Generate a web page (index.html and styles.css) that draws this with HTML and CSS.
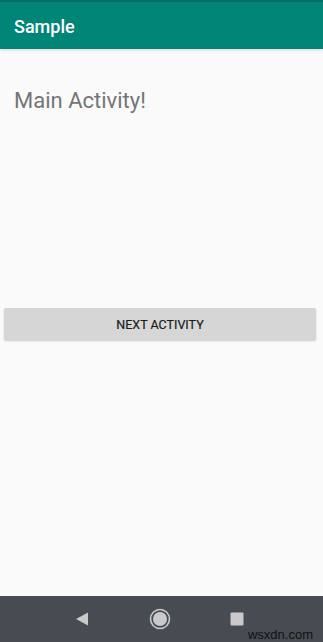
FILE: index.html
```html
<!DOCTYPE html>
<html lang="en">
	<head>
		<meta charset="utf-8"/>
		<title>Sample</title>
		<link rel="stylesheet" href="styles.css">
	</head>
	<body>
		<div class="screen">
			<div class="toolbar">
				<span class="titulo">Sample</span>
			</div>
			<div class="conteudo">
				<div class="texto">Main Activity!</div>
				<div class="botao">NEXT ACTIVITY</div>
			</div>
			<div class="navbar">
				<svg class="icone" width="16" height="16" viewBox="0 0 16 16">
					<path d="M2 8 L14 1.5 L14 14.5 Z" fill="#c9c9c9"/>
				</svg>
				<svg class="icone" width="22" height="22" viewBox="0 0 22 22">
					<circle cx="11" cy="11" r="9.5" fill="none" stroke="#c9c9c9" stroke-width="1.6"/>
					<circle cx="11" cy="11" r="7" fill="#c9c9c9"/>
				</svg>
				<svg class="icone" width="14" height="14" viewBox="0 0 14 14">
					<rect x="0.5" y="0.5" width="13" height="13" rx="1" fill="#c9c9c9"/>
				</svg>
				<span class="marca">wsxdn.com</span>
			</div>
		</div>
	</body>
</html>
```
FILE: styles.css
```css
html, body {
	width: 100%; height: 100%;
	padding: 0; border: 0; margin: 0;
	background: #fafafa;
	font-family: Roboto, "Liberation Sans", sans-serif;
}
.screen {
	display: flex;
	flex-direction: column;
	height: 100%;
}
.toolbar {
	height: 49px;
	background: #008577;
	border-top: 2px solid #006d61;
	box-sizing: border-box;
	display: flex;
	align-items: center;
	padding: 0 14px;
	box-shadow: 0 1px 3px rgba(0,0,0,0.15);
}
.titulo {
	color: #fff;
	font-size: 18px;
	font-weight: 500;
	margin-top: 2px;
}
.conteudo {
	flex: 1;
	display: flex;
	flex-direction: column;
}
.texto {
	margin: 39px 0 0 14px;
	font-size: 22px;
	color: #757575;
}
.botao {
	margin: 195px 7px 0 4px;
	height: 32px;
	background: #d6d6d6;
	border-radius: 2px;
	box-shadow: 0 1px 2px rgba(0,0,0,0.2);
	display: flex;
	justify-content: center;
	align-items: center;
	font-size: 12.5px;
	font-weight: 400;
	color: #1a1a1a;
	-webkit-text-stroke: 0.2px #1a1a1a;
}
.navbar {
	height: 46px;
	background: #464c51;
	display: flex;
	align-items: center;
	padding: 0 0 0 74px;
	position: relative;
}
.navbar .icone:nth-child(2) {
	margin-left: 59px;
}
.navbar .icone:nth-child(3) {
	margin-left: 59px;
}
.marca {
	position: absolute;
	right: 10px;
	bottom: 0;
	font-family: "Liberation Sans", sans-serif;
	font-size: 13px;
	color: #111;
}
```
